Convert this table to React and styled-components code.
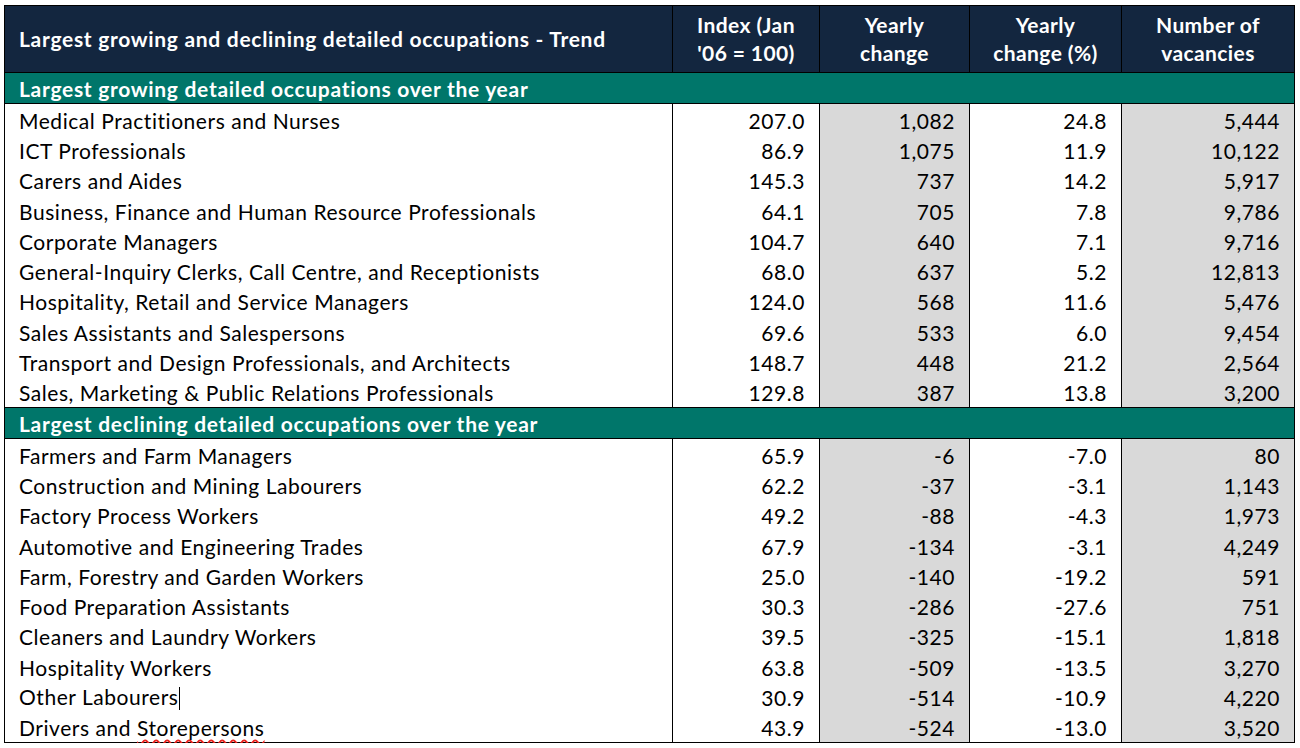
import React from 'react';
import styled, { createGlobalStyle } from 'styled-components';

const GlobalStyle = createGlobalStyle`
	html, body {
		margin: 0;
		padding: 0;
		background: #ffffff;
	}
	body {
		font-family: Lato, "Open Sans", "Liberation Sans", sans-serif;
	}
`;

const Page = styled.div`
	padding: 5px 0 0 4px;
	width: 1300px;
	box-sizing: border-box;
`;

const Table = styled.table`
	border-collapse: collapse;
	table-layout: fixed;
	width: 1290px;
	border: 1px solid #000;
	font-size: 21px;
	letter-spacing: 0.55px;
	color: #000;
`;

const HeadCell = styled.th`
	background: #13263f;
	color: #fff;
	font-weight: 700;
	height: 66px;
	line-height: 28px;
	letter-spacing: ${(p) => (p.left ? '0.7px' : '0.4px')};
	padding: 0 ${(p) => (p.left ? '14px' : '4px')};
	text-align: ${(p) => (p.left ? 'left' : 'center')};
	border-left: 1px solid #000;
	vertical-align: middle;
`;

const SectionCell = styled.td`
	background: #00766a;
	color: #fff;
	font-weight: 700;
	letter-spacing: 0.7px;
	height: 28px;
	line-height: 24px;
	padding: 2px 14px 0;
	border-top: 1px solid #000;
	border-bottom: 1px solid #000;
`;

const Cell = styled.td`
	height: 27.3px;
	padding: 3px 14px 0;
	text-align: ${(p) => (p.num ? 'right' : 'left')};
	background: ${(p) => (p.shade ? '#d9d9d9' : '#fff')};
	border-left: 1px solid #000;
	white-space: nowrap;
	line-height: 24px;
`;

const Caret = styled.span`
	display: inline-block;
	width: 1.5px;
	height: 23px;
	background: #000;
	vertical-align: -5px;
`;

const Misspelt = styled.span`
	text-decoration: underline wavy #e8211c;
	text-decoration-thickness: 1.5px;
	text-underline-offset: 3px;
`;

const growing = [
	['Medical Practitioners and Nurses', '207.0', '1,082', '24.8', '5,444'],
	['ICT Professionals', '86.9', '1,075', '11.9', '10,122'],
	['Carers and Aides', '145.3', '737', '14.2', '5,917'],
	['Business, Finance and Human Resource Professionals', '64.1', '705', '7.8', '9,786'],
	['Corporate Managers', '104.7', '640', '7.1', '9,716'],
	['General-Inquiry Clerks, Call Centre, and Receptionists', '68.0', '637', '5.2', '12,813'],
	['Hospitality, Retail and Service Managers', '124.0', '568', '11.6', '5,476'],
	['Sales Assistants and Salespersons', '69.6', '533', '6.0', '9,454'],
	['Transport and Design Professionals, and Architects', '148.7', '448', '21.2', '2,564'],
	['Sales, Marketing & Public Relations Professionals', '129.8', '387', '13.8', '3,200'],
];

const declining = [
	['Farmers and Farm Managers', '65.9', '-6', '-7.0', '80'],
	['Construction and Mining Labourers', '62.2', '-37', '-3.1', '1,143'],
	['Factory Process Workers', '49.2', '-88', '-4.3', '1,973'],
	['Automotive and Engineering Trades', '67.9', '-134', '-3.1', '4,249'],
	['Farm, Forestry and Garden Workers', '25.0', '-140', '-19.2', '591'],
	['Food Preparation Assistants', '30.3', '-286', '-27.6', '751'],
	['Cleaners and Laundry Workers', '39.5', '-325', '-15.1', '1,818'],
	['Hospitality Workers', '63.8', '-509', '-13.5', '3,270'],
	[<>Other Labourers<Caret /></>, '30.9', '-514', '-10.9', '4,220'],
	[<>Drivers and <Misspelt>Storepersons</Misspelt></>, '43.9', '-524', '-13.0', '3,520'],
];

const DataRows = ({ rows }) =>
	rows.map((r, i) => (
		<tr key={i}>
			<Cell>{r[0]}</Cell>
			<Cell num>{r[1]}</Cell>
			<Cell num shade>{r[2]}</Cell>
			<Cell num>{r[3]}</Cell>
			<Cell num shade>{r[4]}</Cell>
		</tr>
	));

const App = () => {
	return (
		<Page>
			<GlobalStyle />
			<Table>
				<colgroup>
					<col style={{ width: 668 }} />
					<col style={{ width: 147 }} />
					<col style={{ width: 150 }} />
					<col style={{ width: 152 }} />
					<col style={{ width: 173 }} />
				</colgroup>
				<thead>
					<tr>
						<HeadCell left>Largest growing and declining detailed occupations - Trend</HeadCell>
						<HeadCell>Index (Jan<br />'06 = 100)</HeadCell>
						<HeadCell>Yearly<br />change</HeadCell>
						<HeadCell>Yearly<br />change (%)</HeadCell>
						<HeadCell>Number of<br />vacancies</HeadCell>
					</tr>
				</thead>
				<tbody>
					<tr>
						<SectionCell colSpan={5}>Largest growing detailed occupations over the year</SectionCell>
					</tr>
					<DataRows rows={growing} />
					<tr>
						<SectionCell colSpan={5}>Largest declining detailed occupations over the year</SectionCell>
					</tr>
					<DataRows rows={declining} />
				</tbody>
			</Table>
		</Page>
	);
};

export default App;
